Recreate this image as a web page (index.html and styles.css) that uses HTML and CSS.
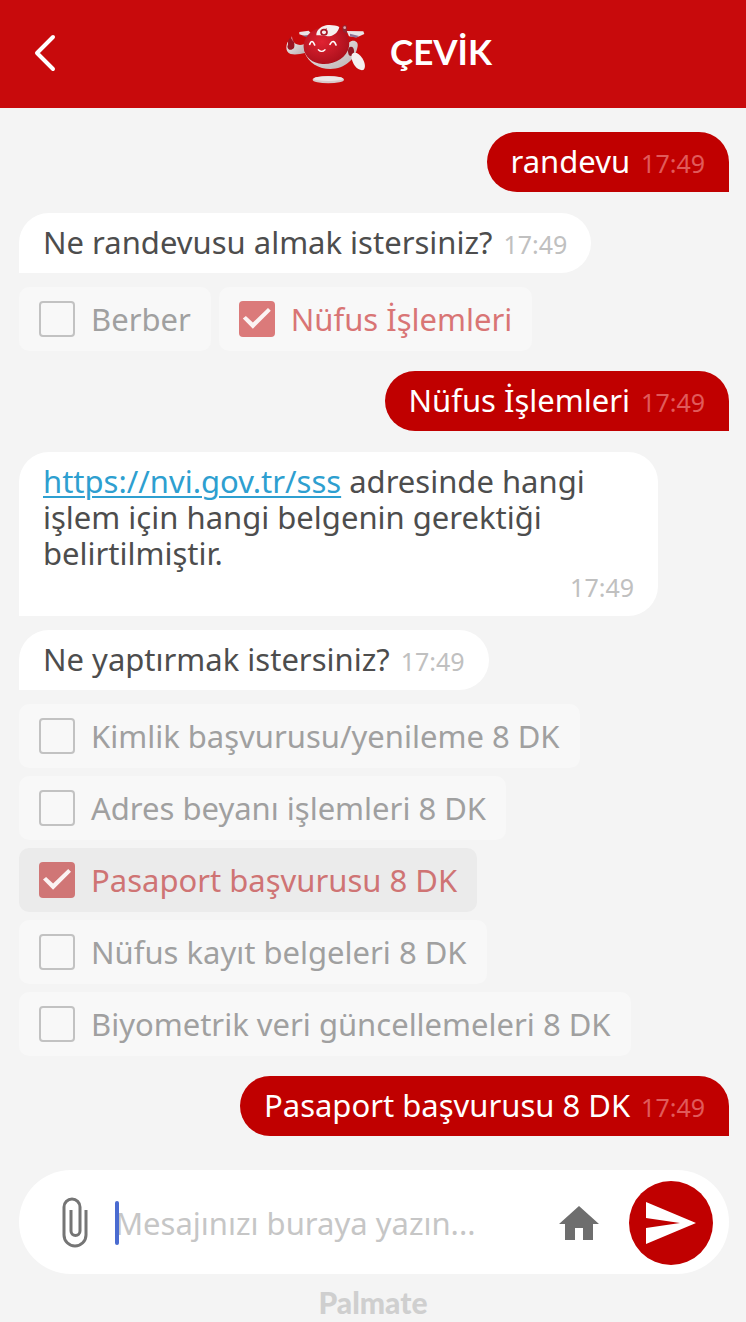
FILE: index.html
```
<!DOCTYPE html>
<html lang="tr">
<head>
    <meta charset="UTF-8">
    <meta name="viewport" content="width=device-width, initial-scale=1.0">
    <title>ÇEVİK</title>
    <link rel="stylesheet" href="styles.css">
</head>
<body>
    <header class="header">
        <button class="back" type="button" aria-label="Geri">
            <svg width="24" height="40" viewBox="0 0 24 40" fill="none" stroke="#fff" stroke-width="4" stroke-linecap="round" stroke-linejoin="round">
                <path d="M21 3 5 19l16 16"/>
            </svg>
        </button>
        <div class="brand">
            <svg class="robot" width="80" height="62" viewBox="48 42 240 186" aria-hidden="true">
                <defs>
                    <radialGradient id="ball" cx="40%" cy="40%" r="65%">
                        <stop offset="0" stop-color="#e02332"/>
                        <stop offset="1" stop-color="#a90f1b"/>
                    </radialGradient>
                    <linearGradient id="shell" x1="0" y1="0" x2="1" y2="1">
                        <stop offset="0" stop-color="#f4f2f2"/>
                        <stop offset="1" stop-color="#b9aeb0"/>
                    </linearGradient>
                </defs>
                <!-- antennas -->
                <path d="M88 69l28-4 12 14-13 6-27-9z" fill="#e9e4e6"/>
                <path d="M96 80l22-2-4 8z" fill="#7a5f78"/>
                <path d="M230 66l50 1 3 8-22 10-24-3z" fill="#e9e4e6"/>
                <path d="M240 74l27 7-9 5-18-4z" fill="#8c7396"/>
                <path d="M217 53q7-9 13-2l1 24-13-8z" fill="#8f2734"/>
                <circle cx="224" cy="56" r="4" fill="#dfa4aa"/>
                <!-- left arm -->
                <path d="M53 99c-7 15-5 32 9 36 14 3 29 0 43-3l-3-26c-15 4-29 1-34-12z" fill="url(#shell)"/>
                <path d="M54 105c-1-10 3-17 8-19 9 4 14 18 10 31-8 9-19 6-20-4z" fill="#991522"/>
                <path d="M63 88q-1-8 3-5l5 17z" fill="#d46872"/>
                <!-- shell behind the ball -->
                <path d="M103 128c12 34 44 52 78 52 44 0 76-30 82-68 2-12-8-20-20-15-12 6-20 14-26 24z" fill="url(#shell)"/>
                <!-- body -->
                <path d="M174 53c-46 0-74 30-73 62 1 30 29 49 56 50 38 2 74-20 80-52 6-33-21-60-63-60z" fill="url(#ball)"/>
                <!-- cap -->
                <path d="M139 79c0-14 10-25 29-30 13-2 30 0 40 5-4 17-17 28-35 28-11-3-22-4-34-3z" fill="#f5f0f0"/>
                <ellipse cx="162" cy="70" rx="9" ry="8" fill="none" stroke="#a91927" stroke-width="5"/>
                <path d="M163 61l8-3-4 9z" fill="#a91927"/>
                <!-- face -->
                <g fill="none" stroke="#fff" stroke-linecap="round">
                    <path d="M119 106q7-18 15 2" stroke-width="5"/>
                    <path d="M180 106q10-18 18 2" stroke-width="5"/>
                    <path d="M145 122q10 10 20 0" stroke-width="4"/>
                </g>
                <!-- right arm -->
                <ellipse cx="243" cy="127" rx="9" ry="14" fill="#8e1723"/>
                <path d="M246 135c8-8 22-2 31 13 9 15 10 28 4 34-6 4-19-1-26-11-7-10-14-26-9-36z" fill="#f4f0f1"/>
                <!-- hover plate -->
                <ellipse cx="175" cy="212" rx="47" ry="11" fill="#d9c9ca"/>
                <ellipse cx="175" cy="209" rx="44" ry="7" fill="#eee7e7"/>
            </svg>
            <h1 class="title">ÇEVİK</h1>
        </div>
    </header>

    <main class="chat">
        <div class="bubble user">
            <span>randevu</span>
            <time class="time">17:49</time>
        </div>

        <div class="bubble bot after-user">
            <span>Ne randevusu almak istersiniz?</span>
            <time class="time">17:49</time>
        </div>
        <div class="options inline">
            <label class="option"><input type="checkbox">Berber</label>
            <label class="option"><input type="checkbox" checked>Nüfus İşlemleri</label>
        </div>

        <div class="bubble user">
            <span>Nüfus İşlemleri</span>
            <time class="time">17:49</time>
        </div>

        <div class="bubble bot long after-user">
            <span><a href="https://nvi.gov.tr/sss">https://nvi.gov.tr/sss</a> adresinde hangi işlem için hangi belgenin gerektiği belirtilmiştir.</span>
            <time class="time">17:49</time>
        </div>
        <div class="bubble bot">
            <span>Ne yaptırmak istersiniz?</span>
            <time class="time">17:49</time>
        </div>
        <div class="options">
            <label class="option"><input type="checkbox">Kimlik başvurusu/yenileme 8 DK</label>
            <label class="option"><input type="checkbox">Adres beyanı işlemleri 8 DK</label>
            <label class="option pressed"><input type="checkbox" checked>Pasaport başvurusu 8 DK</label>
            <label class="option"><input type="checkbox">Nüfus kayıt belgeleri 8 DK</label>
            <label class="option"><input type="checkbox">Biyometrik veri güncellemeleri 8 DK</label>
        </div>

        <div class="bubble user">
            <span>Pasaport başvurusu 8 DK</span>
            <time class="time">17:49</time>
        </div>
    </main>

    <form class="composer">
        <button class="icon-button" type="button" aria-label="Dosya ekle">
            <svg width="28" height="52" viewBox="0 0 28 52" fill="none" stroke="#757575" stroke-width="3">
                <path d="M25 13v25a11 11 0 0 1-22 0V10a8 8 0 0 1 16 0v24a4 4 0 0 1-9 0V13"/>
            </svg>
        </button>
        <div class="field">
            <span class="caret"></span>
            <input class="message" type="text" placeholder="Mesajınızı buraya yazın..." aria-label="Mesaj">
        </div>
        <button class="icon-button" type="button" aria-label="Ana sayfa">
            <svg width="40" height="34" viewBox="0 0 40 34" fill="#6e6e6e">
                <path d="M20 0 40 18h-6v16H24V22h-8v12H6V18H0z"/>
            </svg>
        </button>
        <button class="send" type="submit" aria-label="Gönder">
            <svg width="50" height="42" viewBox="0 0 50 42" fill="#fff">
                <path d="M0 0 50 21 0 42V26l34-5L0 16z"/>
            </svg>
        </button>
    </form>

    <footer class="footer">Palmate</footer>
</body>
</html>
```
FILE: styles.css
```
* {
    box-sizing: border-box;
}

body {
    margin: 0;
    min-height: 100vh;
    display: flex;
    flex-direction: column;
    background: #f4f4f4;
    color: #4d4d4d;
    font-family: "Noto Sans", "Open Sans", sans-serif;
    font-size: 31px;
    line-height: 36px;
}

button {
    display: flex;
    align-items: center;
    justify-content: center;
    padding: 0;
    border: none;
    background: none;
    cursor: pointer;
}

/* Header */
.header {
    display: flex;
    align-items: center;
    height: 108px;
    padding: 0 32px 0 24px;
    background: #c80a0c;
}

.back {
    width: 40px;
    height: 56px;
}

.brand {
    flex: 1;
    display: flex;
    align-items: center;
    justify-content: center;
    gap: 24px;
}

.title {
    margin: 0;
    padding-bottom: 6px;
    color: #fff;
    font-family: Lato, sans-serif;
    font-size: 35px;
    font-weight: 700;
}

/* Messages */
.chat {
    flex: 1;
    display: flex;
    flex-direction: column;
    align-items: flex-start;
    gap: 14px;
    padding: 24px 17px 34px 19px;
}

.bubble {
    display: flex;
    align-items: baseline;
    gap: 11px;
    max-width: 90%;
    padding: 11px 24px 13px;
    border-radius: 30px;
}

.bot {
    background: #fff;
    border-bottom-left-radius: 0;
}

.user {
    align-self: flex-end;
    background: #c00000;
    color: #fff;
    border-bottom-right-radius: 0;
}

.options + .user {
    margin-top: 6px;
}

.after-user {
    margin-top: 7px;
}

.long {
    flex-direction: column;
    gap: 0;
}

.long .time {
    align-self: flex-end;
}

.bubble a {
    color: #2e9fd0;
    text-decoration-thickness: 2px;
    text-underline-offset: 3px;
}

.time {
    color: #c0c0c0;
    font-size: 25px;
    line-height: 32px;
}

.user .time {
    color: #e05a5a;
}

/* Options */
.options {
    display: flex;
    flex-direction: column;
    align-items: flex-start;
    gap: 8px;
}

.inline {
    flex-direction: row;
}

.option {
    display: flex;
    align-items: center;
    gap: 16px;
    padding: 14px 20px;
    border-radius: 10px;
    background: #f8f8f8;
    color: #a0a0a0;
}

.option:has(:checked) {
    color: #d97575;
}

.option.pressed {
    background: #ebebeb;
    color: #cf7474;
}

.option input {
    appearance: none;
    width: 36px;
    height: 36px;
    margin: 0;
    border: 2px solid #c2c2c2;
    border-radius: 4px;
}

.option input:checked {
    display: grid;
    place-items: center;
    border: none;
    background: #db7a7a;
}

.option.pressed input {
    background: #d07676;
}

.option input:checked::before {
    content: "";
    width: 28px;
    height: 22px;
    background: #fbf3f3;
    clip-path: polygon(0 48%, 11% 36%, 36% 66%, 90% 0, 100% 12%, 36% 94%);
}

/* Composer */
.composer {
    display: flex;
    align-items: center;
    height: 104px;
    margin: 0 17px 0 19px;
    padding: 2px 16px 0 36px;
    border-radius: 52px;
    background: #fff;
}

.icon-button {
    width: 40px;
    height: 56px;
}

.field {
    position: relative;
    flex: 1;
    min-width: 0;
    margin: 0 20px;
}

.caret {
    position: absolute;
    top: 0;
    left: 0;
    width: 4px;
    height: 44px;
    border-radius: 2px;
    background: #4a6bd0;
}

.message {
    display: block;
    width: 100%;
    height: 44px;
    padding: 0;
    border: none;
    outline: none;
    background: none;
    color: inherit;
    font: inherit;
}

.message::placeholder {
    color: #c6c6c6;
    opacity: 1;
}

.send {
    width: 84px;
    height: 84px;
    margin-left: 30px;
    border-radius: 50%;
    background: #c00000;
}

/* Footer */
.footer {
    padding: 10px 0 2px;
    text-align: center;
    color: #cfcfcf;
    font-family: Lato, sans-serif;
    font-size: 30px;
    font-weight: 900;
}
```
